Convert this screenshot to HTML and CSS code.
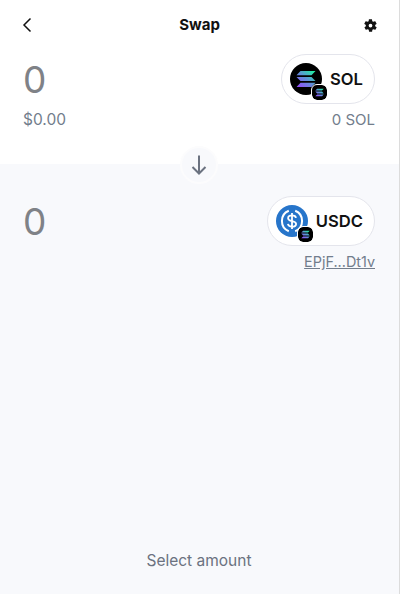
FILE: index.html
```html
<!DOCTYPE html>
<html lang="en">
<head>
<meta charset="utf-8">
<title>Swap</title>
<link rel="stylesheet" href="styles.css">
</head>
<body>
<div class="app">
  <header class="header">
    <svg class="back" width="10" height="16" viewBox="0 0 10 16"><path d="M8.500 1.500 2 8l6.500 6.500" fill="none" stroke="#111" stroke-width="1.500"/></svg>
    <h1 class="title">Swap</h1>
    <svg class="gear" width="15" height="15" viewBox="0 0 24 24"><path fill="#111" fill-rule="evenodd" d="M19.400 13c.1-.3.100-.7.100-1s0-.7-.1-1l2.100-1.600c.2-.2.300-.4.100-.7l-2-3.400c-.1-.2-.4-.3-.6-.2l-2.500 1a7 7 0 0 0-1.700-1l-.4-2.700c0-.2-.2-.4-.5-.4h-4c-.2 0-.4.200-.5.400l-.4 2.700a7 7 0 0 0-1.700 1l-2.500-1c-.2-.1-.5 0-.6.200l-2 3.400c-.1.300-.1.500.1.700L4.600 11c-.1.300-.1.700-.1 1s0 .7.100 1l-2.100 1.600c-.2.200-.3.400-.1.700l2 3.400c.1.200.4.300.6.200l2.500-1c.5.400 1.100.7 1.700 1l.4 2.700c.1.200.3.400.5.400h4c.3 0 .5-.2.500-.4l.4-2.700c.6-.3 1.200-.6 1.700-1l2.500 1c.2.100.5 0 .6-.2l2-3.400c.2-.3.100-.5-.1-.7zM12 15a3 3 0 1 1 0-6 3 3 0 0 1 0 6z"/></svg>
  </header>

  <section class="panel panel-from">
    <div class="row">
      <div class="amount">0</div>
      <button class="token">
        <span class="logo-wrap">
          <svg class="logo" viewBox="0 0 32 32">
            <defs><linearGradient id="sg" x1="0" y1="1" x2="1" y2="0"><stop offset="0" stop-color="#9945ff"/><stop offset=".5" stop-color="#5f8fd8"/><stop offset="1" stop-color="#19fb9b"/></linearGradient></defs>
            <circle cx="16" cy="16" r="16" fill="#000"/>
            <path fill="url(#sg)" d="M10.500 8h15l-4 4.200h-15zM6.500 13.900h15l4 4.200h-15zM10.500 19.800h15l-4 4.200h-15z"/>
          </svg>
          <svg class="chain" viewBox="0 0 16 16">
            <rect width="16" height="16" rx="5" fill="#000"/>
            <path fill="url(#sg)" d="M5.500 4h7l-1.800 1.900H3.500zM3.500 7.050h7.200l1.800 1.900h-7zM5.500 10.100h7l-1.800 1.900H3.500z"/>
          </svg>
        </span>
        <span class="sym">SOL</span>
      </button>
    </div>
    <div class="row sub">
      <span class="usd">$0.00</span>
      <span>0 SOL</span>
    </div>
    <div class="switch">
      <svg width="16" height="20" viewBox="0 0 16 20"><path d="M8 .5v18.500M1.500 12 8 18.500 14.500 12" fill="none" stroke="#6b7280" stroke-width="2"/></svg>
    </div>
  </section>

  <section class="panel panel-to">
    <div class="row">
      <div class="amount">0</div>
      <button class="token">
        <span class="logo-wrap">
          <svg class="logo" viewBox="0 0 32 32">
            <circle cx="16" cy="16" r="16" fill="#2775ca"/>
            <path d="M12.800 5.800a11 11 0 0 0 0 20.400M19.200 5.800a11 11 0 0 1 0 20.400" fill="none" stroke="#fff" stroke-width="2"/>
            <path d="M20 12.800c-.3-1.600-1.800-2.400-4-2.400-2.300 0-3.900 1.100-3.900 2.800 0 3.900 8 2 8 5.700 0 1.700-1.700 2.700-4.100 2.700-2.300 0-3.800-1-4.100-2.700M16 8v16" fill="none" stroke="#fff" stroke-width="1.800"/>
          </svg>
          <svg class="chain" viewBox="0 0 16 16">
            <rect width="16" height="16" rx="5" fill="#000"/>
            <path fill="url(#sg)" d="M5.500 4h7l-1.800 1.900H3.500zM3.500 7.050h7.200l1.800 1.900h-7zM5.500 10.100h7l-1.800 1.900H3.500z"/>
          </svg>
        </span>
        <span class="sym">USDC</span>
      </button>
    </div>
    <div class="row sub sub-end">
      <a class="mint" href="#">EPjF...Dt1v</a>
    </div>
    <div class="status">Select amount</div>
  </section>
</div>
</body>
</html>
```

FILE: styles.css
```css
* { box-sizing: border-box; }
html, body { margin: 0; height: 100%; }
body { background: #fff; font-family: "Inter", "Noto Sans", sans-serif; color: #111; }
.app { width: 400px; height: 594px; display: flex; flex-direction: column; border-right: 1px solid #dcdcdc; }
.header { height: 50px; padding: 0 21px 0 22px; display: flex; align-items: center; justify-content: space-between; position: relative; }
.title { position: absolute; left: 0; right: 0; margin: 0; text-align: center; font-size: 15px; font-weight: 700; line-height: 50px; }
.panel { padding: 0 24px 0 23px; position: relative; }
.panel-from { height: 114px; padding-top: 4px; background: #fff; }
.panel-to { flex: 1; padding-top: 32px; background: #f8f9fc; display: flex; flex-direction: column; }
.row { display: flex; justify-content: space-between; align-items: center; }
.amount { height: 50px; padding-top: 1px; font-size: 37px; line-height: 50px; color: #7f8287; font-weight: 400; }
.token { height: 50px; padding: 0 11px 0 8px; display: flex; align-items: center; gap: 8px; background: #fff; border: 1px solid #e4e5ec; border-radius: 25px; font: inherit; }
.logo-wrap { position: relative; width: 32px; height: 32px; display: block; }
.logo { width: 32px; height: 32px; display: block; }
.chain { position: absolute; right: -5px; bottom: -5px; width: 15px; height: 15px; outline: 1.500px solid #fff; border-radius: 5px; }
.sym { font-size: 16.600px; font-weight: 600; color: #111; }
.sub { font-size: 15px; line-height: 20px; color: #727d8c; margin-top: 6px; }
.usd { font-size: 15.500px; }
.sub-end { justify-content: flex-end; }
.mint { color: #727d8c; text-decoration: underline; font-size: 14.400px; }
.switch { position: absolute; left: 180px; top: 96px; width: 38px; height: 38px; border-radius: 50%; background: #f8f9fc; border: 2px solid #fcfcfd; display: flex; align-items: center; justify-content: center; z-index: 1; }
.status { margin-top: auto; margin-bottom: 23px; text-align: center; font-size: 15.500px; line-height: 20px; color: #6b7280; }
```
